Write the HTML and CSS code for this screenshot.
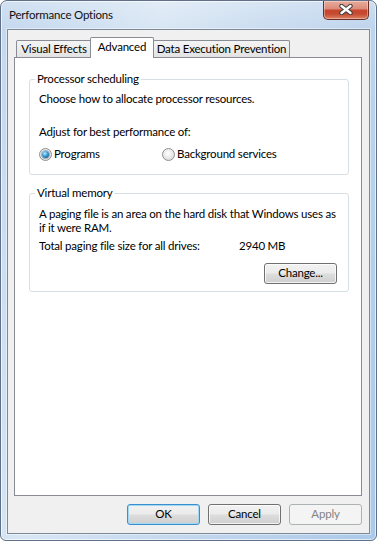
FILE: index.html
```
<!DOCTYPE html>
<html>
<head>
<meta charset="utf-8">
<link rel="stylesheet" href="styles.css">
</head>
<body>
<div class="window">
  <div class="titlebar">
    <span class="title">Performance Options</span>
    <div class="close">
      <svg width="14" height="11" viewBox="0 0 14 11">
        <path d="M2.5 2 L11.5 9 M11.5 2 L2.5 9" stroke="#3b3b3b" stroke-width="4.4" stroke-linecap="round"/>
        <path d="M2.5 2 L11.5 9 M11.5 2 L2.5 9" stroke="#ffffff" stroke-width="2.4" stroke-linecap="round"/>
      </svg>
    </div>
  </div>
  <div class="client">
    <div class="tabs">
      <div class="tab tab-ve">Visual Effects</div>
      <div class="tab tab-adv selected">Advanced</div>
      <div class="tab tab-dep">Data Execution Prevention</div>
    </div>
    <div class="panel">
      <fieldset class="group group-cpu">
        <legend>Processor scheduling</legend>
        <p class="line">Choose how to allocate processor resources.</p>
        <p class="line adjust">Adjust for best performance of:</p>
        <div class="radios">
          <label class="radio-opt first"><span class="radio checked"></span>Programs</label>
          <label class="radio-opt"><span class="radio"></span>Background services</label>
        </div>
      </fieldset>
      <fieldset class="group group-vm">
        <legend>Virtual memory</legend>
        <p class="line">A paging file is an area on the hard disk that Windows uses as<br>if it were RAM.</p>
        <div class="line total"><span class="total-label">Total paging file size for all drives:</span><span>2940 MB</span></div>
        <div class="actions"><button class="btn">Change...</button></div>
      </fieldset>
    </div>
    <div class="buttons">
      <button class="btn default">OK</button>
      <button class="btn">Cancel</button>
      <button class="btn disabled">Apply</button>
    </div>
  </div>
</div>
</body>
</html>
```
FILE: styles.css
```
* { box-sizing: border-box; }
html, body { margin: 0; padding: 0; background: #ffffff; }
body {
  font-family: Lato, "Liberation Sans", sans-serif;
  font-size: 11.5px;
  letter-spacing: -0.2px;
  line-height: 14px;
  color: #000;
}
.window {
  width: 377px;
  height: 541px;
  border: 1px solid #5f7088;
  border-radius: 7px 7px 6px 6px;
  padding: 0 6px 6px;
  display: flex;
  flex-direction: column;
  background:
    linear-gradient(180deg, rgba(255,255,255,0.25), rgba(255,255,255,0) 30px),
    linear-gradient(105deg, #c2d7ee 0%, #d8e6f4 32%, #cadcf0 52%, #bcd3ec 75%, #abc9ea 100%);
  box-shadow: inset 0 0 0 1px rgba(255,255,255,0.65);
}
.titlebar {
  height: 28px;
  margin: 0 -6px;
  padding: 0 7px;
  display: flex;
  justify-content: space-between;
  align-items: center;
}
.title { padding-bottom: 1px; padding-left: 1px; color: #111; }
.close {
  align-self: flex-start;
  width: 46px;
  height: 19px;
  border: 1px solid #6a3027;
  border-top: none;
  border-radius: 0 0 5px 5px;
  background: linear-gradient(180deg, #e8ab9c 0%, #dc8d7a 42%, #c8462e 52%, #c54b31 72%, #de8263 100%);
  box-shadow: inset 0 0 0 1px rgba(255,255,255,0.35);
  display: flex;
  align-items: center;
  justify-content: center;
  padding-bottom: 1px;
}
.close svg { display: block; }
.client {
  flex: 1;
  border: 1px solid #7d8996;
  background: #f0f0f0;
  box-shadow: 0 0 0 1px rgba(255,255,255,0.45);
  padding: 7px 7px 8px 6px;
  display: flex;
  flex-direction: column;
}
.tabs {
  height: 20px;
  display: flex;
  align-items: flex-end;
  padding-left: 2px;
  position: relative;
  z-index: 1;
}
.tab {
  height: 17px;
  border: 1px solid #898c95;
  border-bottom: none;
  border-radius: 2px 2px 0 0;
  background: linear-gradient(180deg, #f4f4f4 0%, #ececec 50%, #e2e2e2 100%);
  padding-top: 1px;
  text-align: center;
  white-space: nowrap;
}
.tab-ve { width: 76px; }
.tab-adv { width: 64px; }
.tab-dep { width: 137px; }
.tab.selected {
  height: 21px;
  margin: 0 -1px -1px -2px;
  background: #ffffff;
  padding-top: 2px;
  position: relative;
  z-index: 2;
}
.panel {
  height: 439px;
  border: 1px solid #898c95;
  background: #ffffff;
  padding: 0 12px 0 14px;
}
.group {
  margin: 0;
  border: 1px solid #d5dfe5;
  border-radius: 3px;
  padding: 0 9px;
  min-width: 0;
}
.group legend {
  margin-left: -4px;
  padding: 0 2px;
  line-height: 14px;
}
.group-cpu { margin-top: 14px; padding-top: 6px; padding-bottom: 13px; }
.group-vm { margin-top: 11px; padding-top: 7px; padding-bottom: 7px; }
.line { margin: 0; white-space: nowrap; }
.adjust { margin-top: 19px; }
.radios { display: flex; margin-top: 8px; height: 14px; align-items: center; }
.radio-opt { display: flex; align-items: center; white-space: nowrap; }
.radio-opt.first { width: 123px; }
.radio {
  width: 13px;
  height: 13px;
  border-radius: 50%;
  border: 1px solid #8e8f8f;
  background: radial-gradient(circle at 45% 40%, #ffffff 0%, #eeeeee 40%, #d2d2d2 100%);
  margin-right: 2px;
  display: flex;
  align-items: center;
  justify-content: center;
}
.radio.checked::after {
  content: "";
  width: 7px;
  height: 7px;
  border-radius: 50%;
  background: radial-gradient(circle at 40% 35%, #b8ecff 0%, #3b9ad4 45%, #135a8c 80%, #0d3d5e 100%);
  box-shadow: 0 0 0 1px rgba(20,60,100,0.35);
}
.total { margin-top: 4px; display: flex; }
.total-label { width: 200px; }
.actions { display: flex; justify-content: flex-end; margin-top: 10px; padding-right: 2px; }
.btn {
  width: 73px;
  height: 21px;
  border: 1px solid #707070;
  border-radius: 3px;
  background: linear-gradient(180deg, #f2f2f2 0%, #ebebeb 48%, #dddddd 52%, #cfcfcf 100%);
  box-shadow: inset 0 0 0 1px rgba(255,255,255,0.75);
  font-family: inherit;
  font-size: 11.5px;
  letter-spacing: -0.2px;
  line-height: 14px;
  color: #000;
  padding: 0 0 1px;
}
.btn.default {
  border-color: #3c8fcf;
  box-shadow: inset 0 0 0 1px #9fd8f3;
}
.btn.disabled {
  border-color: #adb2b5;
  background: #f4f4f4;
  box-shadow: none;
  color: #838383;
}
.buttons {
  margin-top: 8px;
  display: flex;
  justify-content: flex-end;
  gap: 8px;
}
```
